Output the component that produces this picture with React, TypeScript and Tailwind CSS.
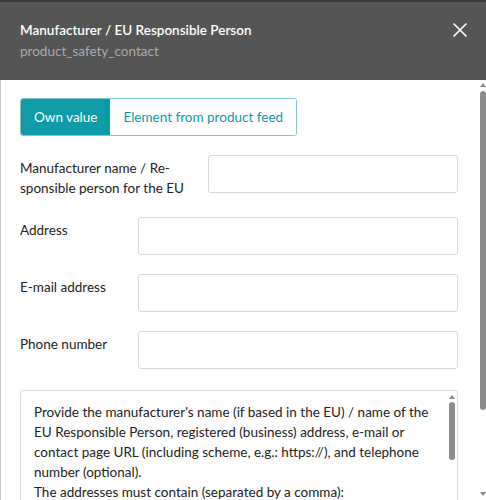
// Modal: Manufacturer / EU Responsible Person

const font = { fontFamily: 'Lato, "Noto Sans", sans-serif' }

function ScrollBar({ thumbTop, thumbHeight }: { thumbTop: number; thumbHeight: number }) {
  return (
    <div className="flex w-[6px] shrink-0 flex-col items-center">
      <div className="mt-[3px] h-0 w-0 border-x-[3px] border-b-[4px] border-x-transparent border-b-[#8a8a8a]" />
      <div className="relative w-full flex-1">
        <div
          className="absolute left-0 w-[6px] rounded-[3px] bg-[#8c8c8c]"
          style={{ top: thumbTop, height: thumbHeight }}
        />
      </div>
      <div className="mb-[4px] h-0 w-0 border-x-[3px] border-t-[4px] border-x-transparent border-t-[#8a8a8a]" />
    </div>
  )
}

function Field({ label, top }: { label: string; top: string }) {
  return (
    <div className={`flex items-start ${top}`}>
      <label className="w-[118px] shrink-0 pt-[3px] text-[13.5px] leading-[20px] text-[#222]">{label}</label>
      <input className="h-[38px] flex-1 rounded-[3px] border border-[#d9d9d9] bg-white outline-none" />
    </div>
  )
}

export default function App() {
  return (
    <div className="h-[500px] w-[486px] overflow-hidden bg-white" style={font}>
      {/* header */}
      <div className="relative h-[80px] border-t-2 border-[#3c3c3c] bg-[#555555] px-5 pt-[18px]">
        <div className="text-[13.5px] font-semibold leading-[20px] text-white">Manufacturer / EU Responsible Person</div>
        <div className="mt-[1px] text-[13.5px] leading-[20px] text-[#aaaaaa]">product_safety_contact</div>
        <button className="absolute right-[18px] top-[20px] text-white">
          <svg width="16" height="16" viewBox="0 0 16 16" fill="none" stroke="currentColor" strokeWidth="1.6">
            <path d="M1.5 1.5L14.5 14.5M14.5 1.5L1.5 14.5" />
          </svg>
        </button>
      </div>

      {/* body */}
      <div className="flex h-[420px] border-l border-[#c8c8c8]">
        <div className="flex-1 pl-[19px] pr-[22px] pt-[18px]">
          <div className="flex">
            <div className="flex h-[38px] overflow-hidden rounded-[3px] border border-[#7cc8cf]">
              <div className="flex items-center bg-[#0e9aa7] px-[13px] text-[13.5px] text-white">Own value</div>
              <div className="flex items-center bg-white px-[13px] text-[13.5px] text-[#0e9aa7]">Element from product feed</div>
            </div>
          </div>

          <div className="mt-[19px] flex items-start">
            <label className="w-[188px] shrink-0 pt-[3px] text-[13.5px] leading-[20px] text-[#222]">
              Manufacturer name / Re-
              <br />
              sponsible person for the EU
            </label>
            <input className="h-[38px] flex-1 rounded-[3px] border border-[#d9d9d9] bg-white outline-none" />
          </div>

          <Field label="Address" top="mt-[19px]" />
          <Field label="E-mail address" top="mt-[19px]" />
          <Field label="Phone number" top="mt-[19px]" />

          <div className="mt-[21px] flex h-[140px] rounded-t-[3px] border border-[#dcdcdc]">
            <div className="flex-1 pl-[13px] pr-[10px] pt-[11px] text-[13.5px] leading-[20px] text-[#222]">
              Provide the manufacturer's name (if based in the EU) / name of the EU Responsible Person, registered
              (business) address, e-mail or contact page URL (including scheme, e.g.: https://), and telephone number
              (optional).
              <br />
              The addresses must contain (separated by a comma):
            </div>
            <div className="w-[6px] shrink-0 mr-[2px] flex flex-col items-center">
              <div className="mt-[4px] h-0 w-0 border-x-[3px] border-b-[4px] border-x-transparent border-b-[#8a8a8a]" />
              <div className="mt-[3px] h-[58px] w-[6px] rounded-[3px] bg-[#8c8c8c]" />
            </div>
          </div>
        </div>
        <ScrollBar thumbTop={4} thumbHeight={319} />
      </div>
    </div>
  )
}
